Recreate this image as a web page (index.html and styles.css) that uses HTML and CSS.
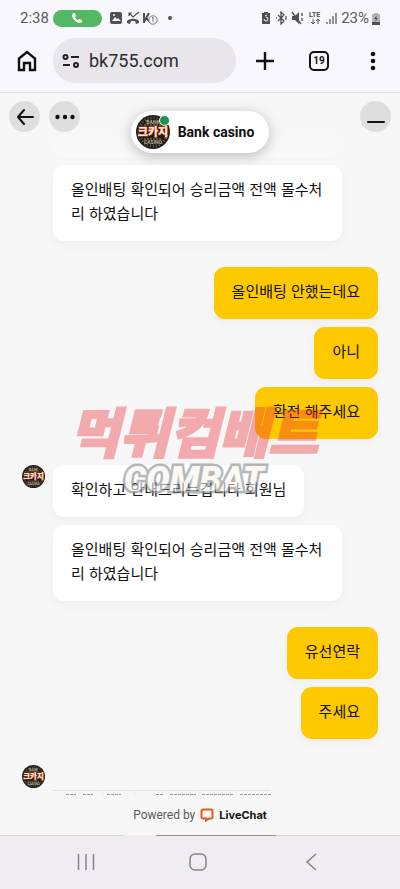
FILE: index.html
```html
<!DOCTYPE html>
<html lang="ko">
<head>
    <meta charset="UTF-8">
    <meta name="viewport" content="width=device-width, initial-scale=1.0">
    <title>Bank casino</title>
    <link rel="stylesheet" href="styles.css">
</head>
<body>
    <!-- Shared logo, used in the title pill and next to the messages -->
    <svg class="defs" width="0" height="0" aria-hidden="true">
        <symbol id="logo" viewBox="0 0 34 34">
            <circle cx="17" cy="17" r="17" fill="#211c17"/>
            <circle cx="17" cy="17" r="14" fill="none" stroke="#706348" stroke-width="3" stroke-dasharray="1 2"/>
            <path d="M8 10h18M8 24h18" stroke="#66543a" stroke-width="2" stroke-dasharray="2 1"/>
            <text x="17" y="9" class="logo-small">BANK</text>
            <text x="17" y="21" class="logo-name">크카지</text>
            <text x="17" y="29" class="logo-small">CASINO</text>
        </symbol>
    </svg>

    <div class="status-bar">
        <div class="status-left">
            <span class="clock">2:38</span>
            <span class="call-chip">
                <svg width="12" height="12" viewBox="0 0 12 12"><path d="M2 1l2 0 1 3-1 1c1 2 2 3 3 3l1-1 3 1v2c-1 1-2 1-3 1C4 10 1 6 1 3z" fill="#fff"/></svg>
            </span>
            <svg width="64" height="14" viewBox="0 0 64 14">
                <rect x="0" y="1" width="12" height="12" rx="2" fill="#505054"/>
                <path d="M2 10l3-4 2 2 1-1 3 3z" fill="#f8f7fd"/>
                <circle cx="4" cy="4" r="1" fill="#f8f7fd"/>
                <path d="M19 2l4 4 6-5M19 5V2h3" fill="none" stroke="#505054" stroke-width="1.2"/>
                <path d="M17 12v-2c3-3 9-3 12 0v2l-3 1-1-3h-4l-1 3z" fill="#505054"/>
                <path d="M34 2v10M34 11l5-9M36 7l5 5" fill="none" stroke="#505054" stroke-width="2"/>
                <circle cx="43" cy="9" r="4.200" fill="#f8f7fd" stroke="#77777b"/>
                <path d="M42 7l1-1v5" fill="none" stroke="#77777b"/>
                <circle cx="60" cy="7" r="2" fill="#505054"/>
            </svg>
        </div>
        <div class="status-right">
            <svg width="76" height="14" viewBox="0 0 76 14">
                <path d="M2 1h4v1h2v11H0V2h2z" fill="#505054"/>
                <path d="M2 8a2 2 0 1 0 2-2M3 5l2-1" fill="none" stroke="#f8f7fd"/>
                <path d="M16 4l6 6-3 3V1l3 3-6 6M14 7h1M24 5v4" fill="none" stroke="#505054" stroke-width="1.300"/>
                <path d="M30 5h3l4-4v12l-4-4h-3z" fill="#505054"/>
                <path d="M30 1l9 12M40 2v3M40 7v3" stroke="#505054" stroke-width="1.400"/>
                <text x="47" y="6" class="lte">LTE</text>
                <path d="M51 8v5l-2-2M51 13l2-2M56 13V8l-2 2M56 8l2 2" fill="none" stroke="#505054"/>
                <path d="M65 13v-2M68 13V8M71 13V5M74 13V2" stroke="#66666a" stroke-width="1.400"/>
            </svg>
            <span>23%</span>
            <svg class="battery" width="8" height="13" viewBox="0 0 8 13">
                <path d="M2 1h4v1h2v8H0V2h2z" fill="#b3b2b8"/>
                <path d="M0 10h8v3H0zM5 3L2 7h2l-1 3 3-4H4z" fill="#505054"/>
            </svg>
        </div>
    </div>

    <div class="browser-bar">
        <button class="bar-button" type="button" aria-label="Home">
            <svg width="20" height="22" viewBox="0 0 20 22"><path d="M2 8.500l8-6.500 8 6.500V20h-5v-7H7v7H2z" fill="none" stroke="#111" stroke-width="2.400"/></svg>
        </button>
        <div class="address">
            <svg width="18" height="14" viewBox="0 0 18 14" fill="none" stroke="#222" stroke-width="2">
                <circle cx="3.500" cy="3" r="2"/><path d="M9 3h8M1 11h7"/><circle cx="14" cy="11" r="2"/>
            </svg>
            <input class="address-input" type="text" value="bk755.com" aria-label="Address">
        </div>
        <div class="bar-actions">
            <button class="bar-button" type="button" aria-label="New tab">
                <svg width="18" height="18" viewBox="0 0 18 18"><path d="M9 0v18M0 9h18" stroke="#111" stroke-width="2.400"/></svg>
            </button>
            <button class="bar-button" type="button" aria-label="Tabs"><span class="tab-count">19</span></button>
            <button class="bar-button" type="button" aria-label="Menu">
                <svg width="6" height="20" viewBox="0 0 6 20" fill="#111"><circle cx="3" cy="3" r="2.300"/><circle cx="3" cy="10" r="2.300"/><circle cx="3" cy="17" r="2.300"/></svg>
            </button>
        </div>
    </div>

    <main class="chat">
        <header class="chat-header">
            <div class="header-left">
                <button class="round-button" type="button" aria-label="Back">
                    <svg width="18" height="16" viewBox="0 0 18 16"><path d="M8 1L2 8l6 7M2 8h15" fill="none" stroke="#111" stroke-width="2" stroke-linecap="round" stroke-linejoin="round"/></svg>
                </button>
                <button class="round-button" type="button" aria-label="More">
                    <svg width="20" height="6" viewBox="0 0 20 6" fill="#111"><circle cx="2.500" cy="3" r="2.200"/><circle cx="10" cy="3" r="2.200"/><circle cx="17.500" cy="3" r="2.200"/></svg>
                </button>
            </div>
            <div class="title-pill">
                <span class="agent">
                    <svg width="34" height="34"><use href="#logo"/></svg>
                    <span class="online"></span>
                </span>
                <span>Bank casino</span>
            </div>
            <button class="round-button minimize" type="button" aria-label="Minimize">
                <svg width="18" height="14" viewBox="0 0 18 14"><path d="M1 12h16" stroke="#111" stroke-width="2" stroke-linecap="round"/></svg>
            </button>
        </header>

        <div class="messages">
            <div class="group agent-group">
                <p class="bubble">올인배팅 확인되어 승리금액 전액 몰수처리 하였습니다</p>
            </div>
            <div class="group user-group">
                <p class="bubble">올인배팅 안했는데요</p>
                <p class="bubble">아니</p>
                <p class="bubble">환전 해주세요</p>
            </div>
            <div class="group agent-group">
                <svg class="avatar" width="23" height="23"><use href="#logo"/></svg>
                <p class="bubble">확인하고 안내드리는겁니다 회원님</p>
                <p class="bubble">올인배팅 확인되어 승리금액 전액 몰수처리 하였습니다</p>
            </div>
            <div class="group user-group">
                <p class="bubble">유선연락</p>
                <p class="bubble">주세요</p>
            </div>
            <div class="group agent-group">
                <svg class="avatar" width="23" height="23"><use href="#logo"/></svg>
                <!-- top edge of an attached table -->
                <svg class="attachment" width="218" height="5" viewBox="0 0 218 5">
                    <path d="M0 0.500h218" stroke="#e2e2e2"/>
                    <path d="M27 0v5M50 0v5M82 0v5M114 0v5M146 0v5M183 0v5" stroke="#ececec"/>
                    <path d="M13 4.500h10M30 4.500h10M54 4.500h14M103 4.500h8M117 4.500h26M149 4.500h31M187 4.500h31" stroke="#999" stroke-dasharray="3 1"/>
                </svg>
            </div>
        </div>

        <div class="watermark" aria-hidden="true">
            <span class="watermark-name">먹튀컴배트</span>
            <span class="watermark-brand">COMBAT</span>
        </div>

        <footer class="powered">
            <span>Powered by</span>
            <svg width="14" height="14" viewBox="0 0 14 14"><path d="M3 1.500h8q1.500 0 1.500 1.500v6q0 1.500-1.500 1.500H9L6 12.500v-2H3Q1.500 10.500 1.500 9V3Q1.500 1.500 3 1.500z" fill="none" stroke="#e8591c" stroke-width="2"/></svg>
            <a href="#">LiveChat</a>
        </footer>
    </main>

    <nav class="system-nav">
        <button type="button" aria-label="Recent apps">
            <svg width="18" height="18" viewBox="0 0 18 18"><path d="M1.500 1v16M9 1v16M16.500 1v16" stroke="#85838a" stroke-width="1.500"/></svg>
        </button>
        <button type="button" aria-label="Home screen">
            <svg width="18" height="18" viewBox="0 0 18 18"><rect x="1" y="1" width="16" height="16" rx="5" fill="none" stroke="#85838a" stroke-width="1.500"/></svg>
        </button>
        <button type="button" aria-label="Go back">
            <svg width="18" height="18" viewBox="0 0 18 18"><path d="M14 1L5 9l9 8" fill="none" stroke="#85838a" stroke-width="1.500"/></svg>
        </button>
    </nav>
</body>
</html>
```

FILE: styles.css
```css
* {
    box-sizing: border-box;
}

body {
    display: flex;
    flex-direction: column;
    min-height: 100vh;
    margin: 0;
    font-family: Roboto, "Noto Sans CJK KR", sans-serif;
    color: #111;
    background: #f8f7fd;
}

svg {
    display: block;
    flex: none;
}

button {
    display: flex;
    align-items: center;
    justify-content: center;
    padding: 0;
    border: 0;
    background: none;
    color: inherit;
    cursor: pointer;
}

.defs {
    position: absolute;
}

.logo-small {
    font: bold 5px Roboto, sans-serif;
    text-anchor: middle;
    fill: #b5ad96;
}

.logo-name {
    font: 900 11px "Noto Sans CJK KR", sans-serif;
    text-anchor: middle;
    fill: #ffe3cb;
    stroke: #b5452a;
    stroke-width: 1px;
    paint-order: stroke;
}

/* Phone status bar */
.status-bar {
    display: flex;
    justify-content: space-between;
    align-items: center;
    height: 36px;
    padding: 0 20px;
    font-size: 15px;
    color: #5b5a5f;
}

.status-left,
.status-right {
    display: flex;
    align-items: center;
}

.call-chip {
    display: flex;
    align-items: center;
    justify-content: center;
    width: 49px;
    height: 17px;
    margin: 0 8px 0 4px;
    border-radius: 9px;
    background: #54b761;
}

.status-right {
    gap: 3px;
}

.lte {
    font: bold 7px Roboto, sans-serif;
    fill: #505054;
}

/* Browser bar */
.browser-bar {
    display: flex;
    align-items: center;
    height: 57px;
    padding: 2px 11px 9px;
    border-bottom: 1px solid #dddce0;
}

.bar-button {
    width: 32px;
    height: 32px;
}

.address {
    display: flex;
    flex: 1;
    align-items: center;
    gap: 9px;
    min-width: 0;
    height: 45px;
    margin: 0 13px 0 10px;
    padding: 0 9px;
    border-radius: 23px;
    background: #e8e6eb;
}

.address-input {
    flex: 1;
    min-width: 0;
    padding: 0;
    border: 0;
    outline: 0;
    font: 18px Roboto, sans-serif;
    color: #2c2b30;
    background: none;
}

.bar-actions {
    display: flex;
    gap: 22px;
}

.tab-count {
    display: flex;
    align-items: center;
    justify-content: center;
    width: 20px;
    height: 20px;
    border: 2px solid #111;
    border-radius: 5px;
    font: bold 10px Roboto, sans-serif;
}

/* Chat window */
.chat {
    position: relative;
    display: flex;
    flex: 1;
    flex-direction: column;
    background: #f7f7f7;
}

.chat-header {
    position: relative;
    z-index: 0;
    display: grid;
    grid-template-columns: 1fr auto 1fr;
    align-items: start;
    height: 65px;
    padding: 8px 9px 0;
}

/* faded end of the message under the header */
.chat-header::after {
    content: "";
    position: absolute;
    z-index: -1;
    left: 53px;
    bottom: 0;
    width: 285px;
    height: 30px;
    border-radius: 0 0 10px 10px;
    background: linear-gradient(#f7f7f7, #f9f9f9);
    box-shadow: 0 1px 1px #f3f3f3;
}

.header-left {
    display: flex;
    gap: 9px;
}

.round-button {
    width: 31px;
    height: 31px;
    border-radius: 50%;
    background: #dedede;
}

.minimize {
    justify-self: end;
}

.title-pill {
    display: flex;
    align-items: center;
    gap: 8px;
    height: 42px;
    margin-top: 10px;
    padding: 0 15px 0 5px;
    border-radius: 21px;
    background: #fff;
    box-shadow: 0 3px 14px rgba(0, 0, 0, 0.25);
    font-size: 14px;
    font-weight: bold;
}

.agent {
    position: relative;
}

.online {
    position: absolute;
    top: 0;
    right: 0;
    width: 11px;
    height: 11px;
    border: 1px solid #fff;
    border-radius: 50%;
    background: #229254;
}

.messages {
    display: flex;
    flex: 1;
    flex-direction: column;
    gap: 26px;
    padding: 7px 22px 0;
}

.group {
    position: relative;
    display: flex;
    flex-direction: column;
    align-items: flex-start;
    gap: 8px;
}

.agent-group {
    padding-left: 31px;
}

.user-group {
    align-items: flex-end;
}

.avatar {
    position: absolute;
    top: 0;
    left: 0;
}

.bubble {
    max-width: 289px;
    margin: 0;
    padding: 12px 18px 16px;
    border-radius: 11px;
    background: #fff;
    box-shadow: 0 4px 10px rgba(0, 0, 0, 0.04);
    font: 15px/24px "Noto Sans CJK KR", sans-serif;
}

.user-group .bubble {
    background: #ffc900;
}

.attachment {
    margin-top: 25px;
}

.watermark {
    position: absolute;
    top: 303px;
    left: 0;
    right: 0;
    display: flex;
    flex-direction: column;
    align-items: center;
    padding-right: 12px;
    pointer-events: none;
}

.watermark-name {
    font: italic 900 54px/68px "Noto Sans CJK KR", sans-serif;
    color: #ea2832;
    -webkit-text-stroke: 2px #ea2832;
    opacity: 0.37;
}

.watermark-brand {
    font: italic 900 35px/32px Roboto, sans-serif;
    color: #fbf6f0;
    -webkit-text-stroke: 5px #85898e;
    paint-order: stroke fill;
    opacity: 0.6;
}

.powered {
    display: flex;
    align-items: center;
    justify-content: center;
    gap: 5px;
    height: 40px;
    font-size: 12px;
    color: #5a5a5a;
}

.powered a {
    font: bold 11px Inter, sans-serif;
    color: #111;
    text-decoration: none;
}

/* Phone navigation */
.system-nav {
    display: flex;
    justify-content: space-around;
    height: 54px;
    padding: 0 33px 0 30px;
    /* thin strip of the page showing above the bar */
    background: linear-gradient(to right, #dcd5c4 31%, #f4f0ee 31% 39%, #a58a86 39% 69%, #dcd5c4 69%) top / 100% 1px no-repeat #efecf2;
}

.system-nav button {
    width: 48px;
}
```
